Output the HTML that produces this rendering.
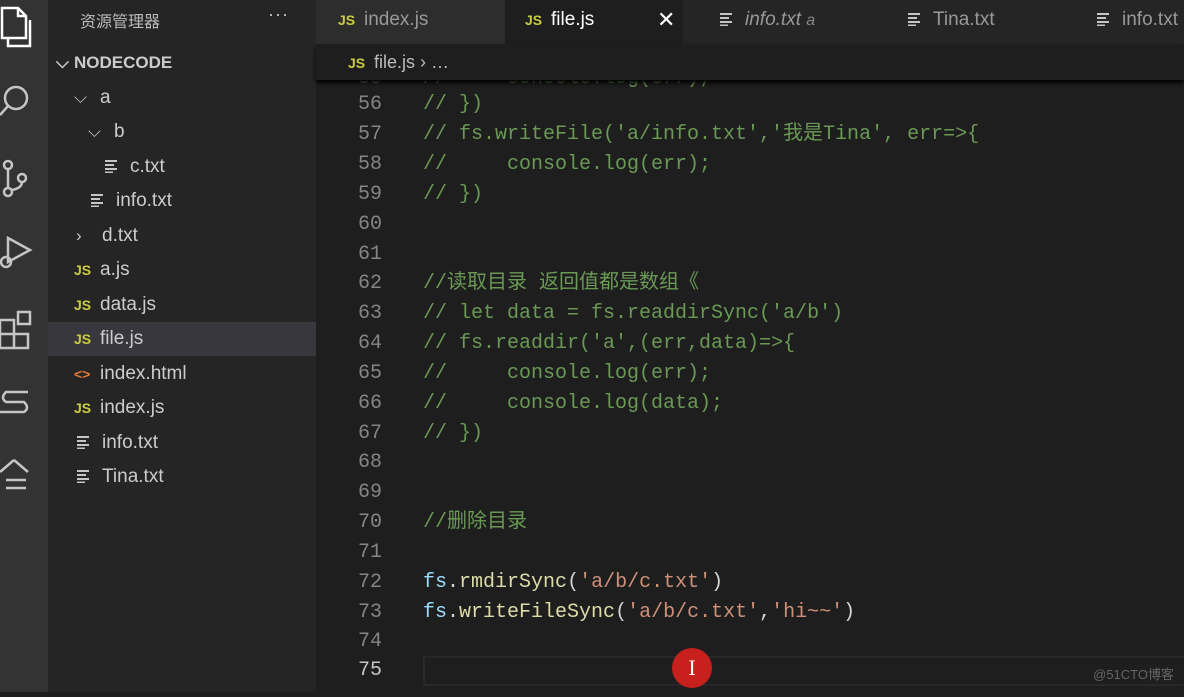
<!DOCTYPE html>
<html><head><meta charset="utf-8"><style>
*{margin:0;padding:0;box-sizing:border-box}
body{width:1184px;height:692px;background:#1e1e1e;overflow:hidden;position:relative;font-family:"Liberation Sans","Noto Sans CJK SC",sans-serif;color:#ccc}
.act{position:absolute;left:0;top:0;width:48px;height:692px;background:#333}
.side{position:absolute;left:48px;top:0;width:268px;height:692px;background:#252526}
.title{position:absolute;left:80px;top:8px;font-size:16px;color:#bbb}
.dots{position:absolute;left:268px;top:4px;font-size:18px;color:#ccc;letter-spacing:1px}
.row{position:absolute;left:48px;width:268px;height:34px;font-size:19px;line-height:34px;color:#ccc;white-space:nowrap}
.row.sel{background:#37373d}
.js{color:#cbcb41;font-weight:bold;font-size:14px;display:inline-block;width:26px}
.txt{display:inline-block;width:14px;height:14px;margin-right:12px;vertical-align:-1px}
.chev{display:inline-block;width:26px;color:#ccc;font-size:17px}
.tabs{position:absolute;left:316px;top:0;width:868px;height:44px;background:#252526}
.tab{position:absolute;top:0;height:44px;line-height:40px;font-size:19px;color:#999;white-space:nowrap}
.crumb{position:absolute;left:316px;top:44px;width:868px;height:36px;background:#1e1e1e;box-shadow:0 3px 4px #000;z-index:2;font-size:18px;line-height:36px;color:#bbb;padding-left:32px}
.code{position:absolute;left:316px;top:82px;width:868px;height:610px;font-family:"Liberation Mono","Noto Sans CJK SC",monospace;font-size:20px}
.ln{position:absolute;left:0;width:66px;text-align:right;color:#858585;height:30px;line-height:30px}
.cl{position:absolute;left:107px;height:30px;line-height:30px;white-space:pre;color:#6a9955}
.f{color:#9cdcfe}.p{color:#d4d4d4}.s{color:#ce9178}.m{color:#dcdcaa}
</style></head><body>
<svg width="0" height="0" style="position:absolute"><defs><g id="t"><path d="M1 2h12M1 6h9M1 10h12M1 13.5h8" stroke="#c5c5c5" stroke-width="2"/></g></defs></svg>
<div class="act">
<svg width="48" height="692" fill="none" stroke="#c5c5c5" stroke-width="2.5">
<path d="M2 8h16l8 8v22H2z M18 8v8h8" stroke="#fff"/>
<path d="M8 38v8h22V20" stroke="#fff"/>
<circle cx="16" cy="98" r="11"/><path d="M8 106l-8 9"/>
<circle cx="8" cy="165" r="4"/><circle cx="8" cy="192" r="4"/><circle cx="22" cy="178" r="4"/><path d="M8 169v19M22 182q0 6-10 8"/>
<path d="M8 238l22 12-22 12z"/><circle cx="6" cy="262" r="5"/>
<path d="M0 320h14v14H0zM0 334h14v14H0zM14 334h14v14H14zM18 312h12v12H18z"/>
<path d="M28 392H6q-6 6 0 10h18q6 6 0 10H0"/>
<path d="M14 460l14 12M14 460L0 472M6 480h20M6 488h20"/>
</svg>
</div>
<div class="side"></div>
<div class="title">资源管理器</div>
<div class="dots">···</div>
<div class="row" style="top:46px;font-weight:bold;font-size:17px"><span style="padding-left:8px" class="chev">⌵</span>NODECODE</div>
<div class="row" style="top:81px;padding-left:26px"><span class="chev">⌵</span>a</div>
<div class="row" style="top:115px;padding-left:40px"><span class="chev">⌵</span>b</div>
<div class="row" style="top:150px;padding-left:56px"><svg class="txt"><use href="#t"/></svg>c.txt</div>
<div class="row" style="top:184px;padding-left:42px"><svg class="txt"><use href="#t"/></svg>info.txt</div>
<div class="row" style="top:219px;padding-left:28px"><span class="chev">›</span>d.txt</div>
<div class="row" style="top:253px;padding-left:26px"><span class="js">JS</span>a.js</div>
<div class="row" style="top:288px;padding-left:26px"><span class="js">JS</span>data.js</div>
<div class="row sel" style="top:322px;padding-left:26px"><span class="js">JS</span>file.js</div>
<div class="row" style="top:357px;padding-left:26px"><span class="js" style="color:#e37933">&lt;&gt;</span>index.html</div>
<div class="row" style="top:391px;padding-left:26px"><span class="js">JS</span>index.js</div>
<div class="row" style="top:426px;padding-left:28px"><svg class="txt"><use href="#t"/></svg>info.txt</div>
<div class="row" style="top:460px;padding-left:28px"><svg class="txt"><use href="#t"/></svg>Tina.txt</div>
<div class="tabs">
<div class="tab" style="left:0;width:189px;background:#2d2d2d;padding-left:22px"><span class="js">JS</span>index.js</div>
<div class="tab" style="left:189px;width:178px;background:#1e1e1e;padding-left:20px;color:#fff"><span class="js">JS</span>file.js<span style="position:absolute;left:152px;font-size:22px">✕</span></div>
<div class="tab" style="left:403px;font-style:italic"><svg class="txt"><use href="#t"/></svg>info.txt <span style="font-size:16px;color:#888">a</span></div>
<div class="tab" style="left:591px"><svg class="txt"><use href="#t"/></svg>Tina.txt</div>
<div class="tab" style="left:780px"><svg class="txt"><use href="#t"/></svg>info.txt</div>
</div>
<div class="crumb"><span class="js">JS</span>file.js › …</div>
<div class="code">
<div class="ln" style="top:-18px">55</div><div class="cl" style="top:-18px">//     console.log(err);</div>
<div class="ln" style="top:8px">56</div><div class="cl" style="top:8px">// })</div>
<div class="ln" style="top:38px">57</div><div class="cl" style="top:38px">// fs.writeFile('a/info.txt','我是Tina', err=>{</div>
<div class="ln" style="top:68px">58</div><div class="cl" style="top:68px">//     console.log(err);</div>
<div class="ln" style="top:98px">59</div><div class="cl" style="top:98px">// })</div>
<div class="ln" style="top:128px">60</div>
<div class="ln" style="top:158px">61</div>
<div class="ln" style="top:187px">62</div><div class="cl" style="top:187px">//读取目录 返回值都是数组《</div>
<div class="ln" style="top:217px">63</div><div class="cl" style="top:217px">// let data = fs.readdirSync('a/b')</div>
<div class="ln" style="top:247px">64</div><div class="cl" style="top:247px">// fs.readdir('a',(err,data)=>{</div>
<div class="ln" style="top:277px">65</div><div class="cl" style="top:277px">//     console.log(err);</div>
<div class="ln" style="top:307px">66</div><div class="cl" style="top:307px">//     console.log(data);</div>
<div class="ln" style="top:337px">67</div><div class="cl" style="top:337px">// })</div>
<div class="ln" style="top:366px">68</div>
<div class="ln" style="top:396px">69</div>
<div class="ln" style="top:426px">70</div><div class="cl" style="top:426px">//删除目录</div>
<div class="ln" style="top:456px">71</div>
<div class="ln" style="top:486px">72</div><div class="cl" style="top:486px"><span class="f">fs</span><span class="p">.</span><span class="m">rmdirSync</span><span class="p">(</span><span class="s">'a/b/c.txt'</span><span class="p">)</span></div>
<div class="ln" style="top:516px">73</div><div class="cl" style="top:516px"><span class="f">fs</span><span class="p">.</span><span class="m">writeFileSync</span><span class="p">(</span><span class="s">'a/b/c.txt'</span><span class="p">,</span><span class="s">'hi~~'</span><span class="p">)</span></div>
<div class="ln" style="top:545px">74</div>
<div style="position:absolute;left:107px;top:574px;width:761px;height:30px;border:2px solid #282828;border-right:none"></div>
<div class="ln" style="top:574px;color:#c6c6c6">75</div>
<div style="position:absolute;left:356px;top:566px;width:40px;height:40px;border-radius:50%;background:#c8201c;color:#fff;text-align:center;line-height:40px;font-size:22px;font-family:'Liberation Serif',serif">I</div>
<div style="position:absolute;right:10px;top:582px;font-family:'Liberation Sans','Noto Sans CJK SC',sans-serif;font-size:13px;color:#666">@51CTO博客</div>
</div>
</body></html>
